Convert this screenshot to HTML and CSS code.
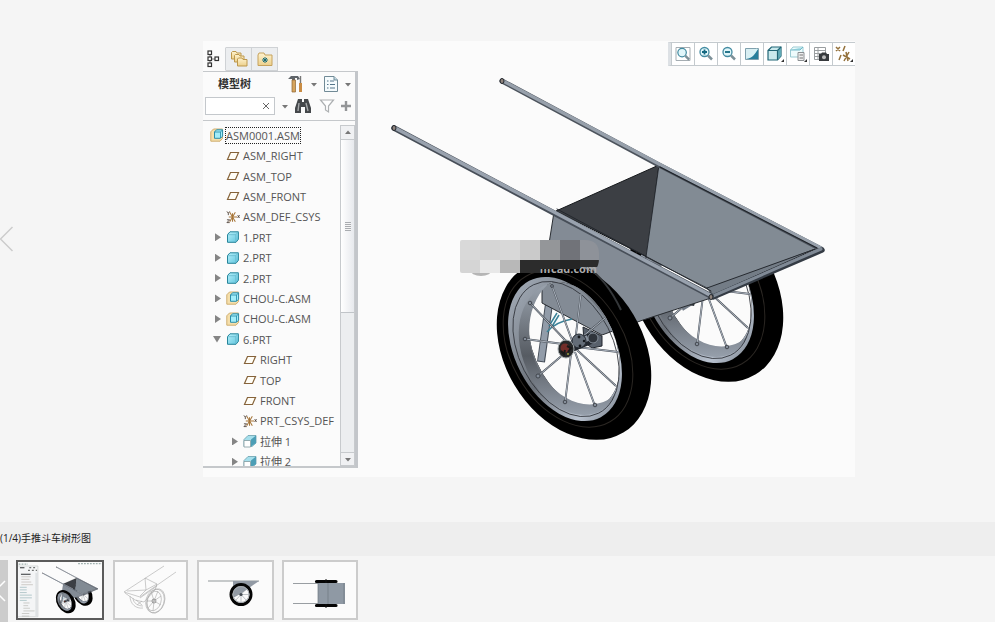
FILE: index.html
```
<!DOCTYPE html>
<html lang="zh-CN">
<head>
<meta charset="utf-8">
<title>手推斗车树形图</title>
<link rel="stylesheet" href="styles.css">
</head>
<body>
<svg class="defs" aria-hidden="true">
  <defs>
    <linearGradient id="rimFill" x1="0" y1="0" x2="1" y2="1">
      <stop offset="0" stop-color="#a7b0bc"/><stop offset=".5" stop-color="#6b7179"/><stop offset=".8" stop-color="#b9c2cf"/><stop offset="1" stop-color="#747c87"/>
    </linearGradient>
    <linearGradient id="innerRim" x1="0" y1="0" x2="0" y2="1">
      <stop offset="0" stop-color="#9aa3ae"/><stop offset=".55" stop-color="#565b62"/><stop offset="1" stop-color="#969fab"/>
    </linearGradient>
    <linearGradient id="cubeFill" x1="0" y1="0" x2="1" y2="1">
      <stop offset="0" stop-color="#b8f2fc"/><stop offset="1" stop-color="#5ec3dc"/>
    </linearGradient>
    <linearGradient id="folderFill" x1="0" y1="0" x2="0" y2="1">
      <stop offset="0" stop-color="#fff3cf"/><stop offset="1" stop-color="#ecd08c"/>
    </linearGradient>
    <clipPath id="opening"><ellipse cx="574" cy="345" rx="66" ry="41" transform="rotate(67 574 345)"/></clipPath>
    <clipPath id="smear"><path d="M462 240H585Q599 240 599 254V258Q599 273 585 273H462Q460 273 460 271V242Q460 240 462 240Z"/></clipPath>

    <symbol id="tyre" viewBox="490 250 170 200" overflow="visible">
      <path fill="#000" fill-rule="evenodd" d="M623.3 432.6A96 69 59 0 1 524.7 267.4A96 69 59 0 1 623.3 432.6ZM599.8 405.8A66 41 67 0 0 548.2 284.2A66 41 67 0 0 599.8 405.8Z"/>
      <ellipse cx="568" cy="349" rx="84" ry="57" transform="rotate(60 568 349)" fill="none" stroke="#2b2723" stroke-width="1"/>
      <path fill="url(#rimFill)" fill-rule="evenodd" d="M600.8 417.2A77 50 62.3 0 1 529.2 280.8A77 50 62.3 0 1 600.8 417.2ZM599.8 405.8A66 41 67 0 0 548.2 284.2A66 41 67 0 0 599.8 405.8Z"/>
      <path fill="url(#innerRim)" d="M548 284C525 292 508 326 527 370C541 403 571 419 592 414C604 411 612 403 616 394C595 413 565 405 545 379C525 351 522 309 548 284Z"/>
      <ellipse cx="566" cy="349" rx="72" ry="47" transform="rotate(63 566 349)" fill="none" stroke="#30343a" stroke-width=".8"/>
      <path d="M587 267C601 276 612 291 621 310" fill="none" stroke="#34373a" stroke-width="2"/>
      <g fill="none" stroke="#4c525a" stroke-width="1.9"><path d="M574 346L552 286M575 342L581 294M576 342L605 318M577 347L618 352M577 350L616 386M575 352L595 406M571 354L565 403M565 353L538 376M563 344L525 339M566 341L530 303"/></g>
      <g fill="none" stroke="#aab2bd" stroke-width="1"><path d="M574 346L552 286M575 342L581 294M576 342L605 318M577 347L618 352M577 350L616 386M575 352L595 406M571 354L565 403M565 353L538 376M563 344L525 339M566 341L530 303"/></g>
      <g fill="#848d99" stroke="#33373d" stroke-width=".8"><circle cx="552" cy="286" r="1.4"/><circle cx="595" cy="405" r="1.8"/><circle cx="565" cy="402" r="1.8"/><circle cx="538" cy="376" r="2"/><circle cx="525" cy="339" r="1.8"/><circle cx="530" cy="303" r="1.8"/></g>
    </symbol>

    <symbol id="cart" viewBox="358 70 497 407">
      <use href="#tyre" x="622" y="192" width="170" height="200"/>
      <path d="M682 309L700 298" stroke="#707985" stroke-width="4"/><path d="M688 305l6 1 2-6" fill="#30353b"/>
      <path d="M554 212L542 288V303L602 335L643 320L711 298Z" fill="#838b95" stroke="#292d32" stroke-width="1"/>
      <path d="M659 165L556 211L647 257Z" fill="#3c3f44" stroke="#15181b" stroke-width="1"/>
      <path d="M659 165L646 257L709 289L818 248Z" fill="#828b94" stroke="#1d2127" stroke-width=".8"/>
      <path d="M707 288L818 248L713 295Z" fill="#737c86" stroke="#262a30" stroke-width="1"/>
      <g stroke-linecap="round">
        <path d="M502 81L659 165L821 249" fill="none" stroke="#4c535c" stroke-width="5"/>
        <path d="M503 81L659 164L821 248" fill="none" stroke="#97a0ab" stroke-width="3.2"/>
        <path d="M660 167L817 248" fill="none" stroke="#20242a" stroke-width="1.2"/>
        <path d="M713 297L822 250" stroke="#343b44" stroke-width="5.5"/>
        <path d="M713 296L821 249" stroke="#7f8995" stroke-width="3"/>
        <path d="M394 128L554 213L711 296" fill="none" stroke="#474e58" stroke-width="5.5"/>
        <path d="M395 128L554 212L710 295" fill="none" stroke="#99a2ae" stroke-width="3.6"/>
        <path d="M557 209L711 291" stroke="#24282e" stroke-width="1"/>
      </g>
      <g fill="#90847d" stroke="#20252b"><ellipse cx="502" cy="81" rx="2" ry="2.5"/><ellipse cx="394" cy="128" rx="2" ry="2.5"/><ellipse cx="711" cy="297" rx="2" ry="2.5"/></g>
      <ellipse cx="574" cy="345" rx="66" ry="41" transform="rotate(67 574 345)" fill="#fbfbfb"/>
      <g clip-path="url(#opening)">
        <path d="M549 304L541 362" stroke="#444c57" stroke-width="8"/><path d="M549 304L541 361" stroke="#929ca9" stroke-width="6"/>
        <path d="M542 270V303L602 335L643 320L620 250Z" fill="#838b95" stroke="#292d32"/>
        <path d="M547 332Q555 322 572 319M549 326L557 313M551 328L559 315" fill="none" stroke="#3b8298" stroke-width="1.5"/>
        <path d="M583 327L602 336V346L592 348L584 342Z" fill="#59616c" stroke="#20252c"/>
      </g>
      <use href="#tyre" x="490" y="250" width="170" height="200"/>
      <path d="M568 348L592 338" stroke="#22272e" stroke-width="11"/><path d="M567 346L588 338" stroke="#89929e" stroke-width="6"/>
      <circle cx="579" cy="341" r="7" fill="#646d78" stroke="#252a31"/><circle cx="593" cy="338" r="5" fill="#30353c" stroke="#858e99"/>
      <g fill="#14171b"><circle cx="579" cy="337" r="1.4"/><circle cx="580" cy="346" r="1.4"/><circle cx="584" cy="341" r="1.2"/></g>
      <ellipse cx="566" cy="349" rx="8" ry="9" fill="#252728" stroke="#a2a9ac"/><circle cx="565" cy="348" r="4.5" fill="#712d29"/><path d="M561 351l3 3 1-4M567 346l4 2-3 4" stroke="#181818" fill="none" stroke-width="2"/><circle cx="568" cy="354" r="1" fill="#999c3f"/>
    </symbol>

    <symbol id="plane" viewBox="0 0 14 12"><path d="M4.5 2.5H12.5L9.5 9.5H1.5Z" fill="#fffdf6" stroke="#86633a" stroke-width="1.2"/></symbol>
    <symbol id="part" viewBox="0 0 14 12"><path d="M1.5 3.5L4 .8H12.4V8.3L10 11.3H1.5Z" fill="url(#cubeFill)" stroke="#26849a"/><path d="M1.5 3.7H9.8V11M9.8 3.7L12.3 1" fill="none" stroke="#65b8cc" stroke-width=".8"/></symbol>
    <symbol id="asm" viewBox="0 0 14 14"><path d="M.8 3.8L3.5 1H12.5V10.5L10 13.2H.8Z" fill="#f5dfab" stroke="#cfae70"/><path d="M4.5 4L6.5 1.8H12.6V8.2L10.5 10.3H4.5Z" fill="#a2edf9" stroke="#2b8eaa"/><path d="M4.5 4H10.5V10M10.5 4L12.4 2" fill="none" stroke="#2287a3" stroke-width=".8"/></symbol>
    <symbol id="csys" viewBox="0 0 15 14"><path d="M3 7H12M4 2L10 12M10 2L4 12M7 3V12" stroke="#a77639" stroke-width="1.1"/><path d="M1 1l1.5 2L4 1M2.5 3V5M1 10H4L1 13H4M12.5 5l2 3M14.5 5l-2 3" fill="none" stroke="#4a3b32" stroke-width=".9"/></symbol>
    <symbol id="extrude" viewBox="0 0 14 14"><path d="M1 5.5L5 1.5H13V9L9 12.5H1Z" fill="#a5dfec" stroke="#6aa0ad" stroke-width=".8"/><path d="M8 5.5L13 1.5V9L8 12.5Z" fill="#4c9eb6"/><path d="M1 6.5H7.5V13H1Z" fill="#fff" stroke="#829ba0" stroke-width=".8"/></symbol>
    <symbol id="caret" viewBox="0 0 8 5"><path d="M1 1H7L4 4.5Z" fill="#777"/></symbol>
    <symbol id="lens" viewBox="0 0 18 18"><circle cx="7.5" cy="7" r="4.5" fill="#e0f6fa" stroke="#438ba1" stroke-width="1.3"/><path d="M11 10.5L15 14.5" stroke="#7c9098" stroke-width="2.5"/></symbol>
  </defs>
</svg>

<main class="gallery">
  <section class="slide">
    <button class="prev" aria-label="上一张"><svg viewBox="0 0 14 28"><path d="M12.5 2L.5 14L12.5 26" fill="none" stroke="#ccc" stroke-width="1.5"/></svg></button>
    <div class="shot">
      <aside class="panel">
        <div class="tabs">
          <button class="tab active" aria-label="树"><svg viewBox="0 0 16 18"><path d="M4 4V15M4 9H10" stroke="#777"/><g fill="#fff" stroke="#333" stroke-width="1.2"><rect x="2" y="1" width="3.5" height="3.5"/><rect x="2" y="7" width="3.5" height="3.5"/><rect x="2" y="13" width="3.5" height="3.5"/><rect x="9" y="7" width="3.5" height="3.5"/></g></svg></button>
          <button class="tab" aria-label="文件夹"><svg viewBox="0 0 18 18"><g fill="url(#folderFill)" stroke="#bd984c"><path d="M1.5 9V2.5l1-1H6l1 1.5h4V9Z"/><path d="M4.5 12V5.5l1-1H9L10 6h4v6Z"/><path d="M7.5 16V9l1-1H12l1 1.5h4V16Z"/></g></svg></button>
          <button class="tab" aria-label="收藏夹"><svg viewBox="0 0 18 18"><path d="M2 15.5V5l1-2h5l1 2h7V15.5Z" fill="url(#folderFill)" stroke="#c6a25d"/><path d="M9 7V13M6 10H12M7 8L11 12M11 8L7 12" stroke="#176b79" stroke-width="1"/></svg></button>
        </div>
        <div class="panel-body">
          <div class="panel-head">
            <div class="head-row">
              <h2>模型树</h2>
              <button aria-label="设置" class="tool"><svg viewBox="0 0 18 18"><path d="M1 4L4 1H11L13 4L10 5V3H8V6H5V4Z" fill="#60656a"/><path d="M5 5H8.5V17H5Z" fill="#d6a45d" stroke="#8e6634" stroke-width=".7"/><path d="M13.5 1V8" stroke="#777" stroke-width="1.4"/><path d="M12 8H15V17H12Z" fill="#c98c44"/></svg></button>
              <svg class="caret"><use href="#caret"/></svg>
              <button aria-label="显示" class="tool"><svg viewBox="0 0 18 18"><path d="M2.5 1.5H12L15.5 5V16.5H2.5Z" fill="#f5fbfd" stroke="#718a96"/><path d="M12 1.5V5H15.5" fill="#c4dce6" stroke="#718a96"/><path d="M5 6H6.5M8 6H12M5 9.5H6.5M8 9.5H13M5 13H6.5M8 13H13" stroke="#54758a"/></svg></button>
              <svg class="caret"><use href="#caret"/></svg>
            </div>
            <div class="head-row">
              <div class="search"><input type="text" aria-label="搜索"><button aria-label="清除"><svg viewBox="0 0 8 8"><path d="M1 1L7 7M7 1L1 7" stroke="#666"/></svg></button></div>
              <svg class="caret"><use href="#caret"/></svg>
              <button aria-label="查找" class="tool"><svg viewBox="0 0 18 18"><path d="M4 2H8V5H10V2H14L17 11V16H11V10H7V16H1V11Z" fill="#45484b"/><path d="M5 6L4 14M12 6L14 14" stroke="#a6a9ab" stroke-width="1.4"/></svg></button>
              <button aria-label="过滤" class="tool"><svg viewBox="0 0 18 18"><path d="M2.5 3H15.5L10.5 9V15L7.5 13V9Z" fill="#fff" stroke="#adb0b2" stroke-width="1.2"/></svg></button>
              <button aria-label="添加" class="tool add"><svg viewBox="0 0 10 10"><path d="M5 0V10M0 5H10" stroke="#939597" stroke-width="2.4"/></svg></button>
            </div>
          </div>
          <div class="tree-area">
            <div class="tree-clip">
              <ul class="tree">
                <li class="root"><svg><use href="#asm"/></svg><span class="selected">ASM0001.ASM</span></li>
                <li><i></i><svg><use href="#plane"/></svg>ASM_RIGHT</li>
                <li><i></i><svg><use href="#plane"/></svg>ASM_TOP</li>
                <li><i></i><svg><use href="#plane"/></svg>ASM_FRONT</li>
                <li><i></i><svg><use href="#csys"/></svg>ASM_DEF_CSYS</li>
                <li><i class="closed"></i><svg><use href="#part"/></svg>1.PRT</li>
                <li><i class="closed"></i><svg><use href="#part"/></svg>2.PRT</li>
                <li><i class="closed"></i><svg><use href="#part"/></svg>2.PRT</li>
                <li><i class="closed"></i><svg><use href="#asm"/></svg>CHOU-C.ASM</li>
                <li><i class="closed"></i><svg><use href="#asm"/></svg>CHOU-C.ASM</li>
                <li><i class="open"></i><svg><use href="#part"/></svg>6.PRT</li>
                <li class="deep"><i></i><svg><use href="#plane"/></svg>RIGHT</li>
                <li class="deep"><i></i><svg><use href="#plane"/></svg>TOP</li>
                <li class="deep"><i></i><svg><use href="#plane"/></svg>FRONT</li>
                <li class="deep"><i></i><svg><use href="#csys"/></svg>PRT_CSYS_DEF</li>
                <li class="deep"><i class="closed"></i><svg><use href="#extrude"/></svg>拉伸 1</li>
                <li class="deep"><i class="closed"></i><svg><use href="#extrude"/></svg>拉伸 2</li>
              </ul>
            </div>
            <div class="scrollbar">
              <button aria-label="向上"><svg class="caret flip"><use href="#caret"/></svg></button>
              <div class="thumb"><span></span></div>
              <button aria-label="向下" class="down"><svg class="caret"><use href="#caret"/></svg></button>
            </div>
          </div>
        </div>
      </aside>
      <div class="stage">
        <div class="toolbar">
          <button aria-label="重新调整"><svg viewBox="0 0 18 18"><path d="M2 2.5H16V15.5H2Z" fill="#fff" stroke="#a5adb2"/><use href="#lens" x="1" y="1" width="17" height="17"/></svg></button>
          <button aria-label="放大"><svg viewBox="0 0 18 18"><use href="#lens" width="18" height="18"/><path d="M7.5 4.5V9.5M5 7H10" stroke="#146981" stroke-width="1.8"/></svg></button>
          <button aria-label="缩小"><svg viewBox="0 0 18 18"><use href="#lens" width="18" height="18"/><path d="M5 7H10" stroke="#146981" stroke-width="1.8"/></svg></button>
          <button aria-label="重画"><svg viewBox="0 0 18 18"><path d="M2.5 3.5H15.5V14.5H2.5Z" fill="#d9eff3" stroke="#7fa0ad"/><path d="M3 14C10 13 12 9 15 4V14Z" fill="#287f9b"/><path d="M6 12L14 4" stroke="#d5f3f6" stroke-width="1.5"/></svg></button>
          <button aria-label="显示样式"><svg viewBox="0 0 18 18"><path d="M2 5.5L5.5 2H15V11L11.5 15H2Z" fill="#c9e9ed" stroke="#216676" stroke-width="1.2"/><path d="M11.5 5.5L15 2V11L11.5 15Z" fill="#5fa9b6"/><path d="M2 5.5H11.5V15M11.5 5.5L15 2" fill="none" stroke="#216676" stroke-width="1.2"/><path d="M15 17h3v-3z" fill="#333"/></svg></button>
          <button aria-label="视图"><svg viewBox="0 0 18 18"><path d="M1.5 5L4 2H14V12H1.5Z" fill="#eefbfc" stroke="#9bcbd3"/><path d="M1.5 5H11L14 2" fill="#a8dfe8" stroke="#73b8c7"/><path d="M9 7.5H15V15.5H9Z" fill="#eee" stroke="#8b8f92"/><path d="M10.5 10H14M10.5 13H14" stroke="#777"/><path d="M15 17h3v-3z" fill="#333"/></svg></button>
          <button aria-label="视图管理器"><svg viewBox="0 0 18 18"><path d="M2.5 2.5H13.5V14.5H2.5ZM2.5 5.5H13.5M2.5 8.5H13.5M2.5 11.5H8M6 2.5V14" fill="#fff" stroke="#9a9ea0"/><path d="M7 9H9L10 7.5H14L15 9H17V16H7Z" fill="#373a3d"/><circle cx="12" cy="12.3" r="2" fill="#bbb"/></svg></button>
          <button aria-label="基准显示"><svg viewBox="0 0 18 18"><path d="M1 2L5 6M5 2L1 6M10 1L8 6M6 10L4 15M8 10L15 14M14 7L9 16M11 7L13 16" fill="none" stroke="#94713b" stroke-width="1.5"/><path d="M15 17h3v-3z" fill="#333"/></svg></button>
        </div>
        <svg class="drawing" viewBox="358 70 497 407" role="img">
          <use href="#cart" x="358" y="70" width="497" height="407"/>
          <ellipse cx="481" cy="270" rx="11" ry="6" fill="#b5b5b5"/>
          <text x="536" y="273" class="watermark">mfcad.com</text>
          <g clip-path="url(#smear)">
            <g shape-rendering="crispEdges">
            <path d="M460 240h20v20h-20z" fill="#d9d9d9"/><path d="M480 240h20v20h-20z" fill="#d5d5d5"/><path d="M500 240h20v20h-20z" fill="#d8d8d8"/><path d="M520 240h20v20h-20z" fill="#cacaca"/><path d="M540 240h20v20h-20z" fill="#949699"/><path d="M560 240h20v20h-20z" fill="#717379"/><path d="M580 240h20v20h-20z" fill="#8e9299"/>
            <path d="M460 260h20v13h-20z" fill="#d5d5d5"/><path d="M480 260h20v13h-20z" fill="#e8e8e8"/><path d="M500 260h20v13h-20z" fill="#b8b8b8"/><path d="M520 260h20v13h-20z" fill="#2c2c2c"/><path d="M540 260h20v9h-20z" fill="#2c2c2c"/><path d="M560 260h20v9h-20z" fill="#252525"/><path d="M580 260h19v7h-19z" fill="#2b2b2b"/>
            </g>
          </g>
        </svg>
      </div>
    </div>
  </section>
  <p class="caption">(1/4)手推斗车树形图</p>
  <nav class="thumbs">
    <button class="thumbs-prev" aria-label="向前"><svg viewBox="0 0 8 24"><path d="M5 2L-5 12L5 22" fill="none" stroke="#fff" stroke-width="1.5"/></svg></button>
    <a href="#" class="thumbnail current" aria-label="1"><svg viewBox="203 41 652 436">
      <path d="M203 41H855V477H203Z" fill="#fbfbfb"/><path d="M203 72H357V467H203" fill="#f4f5f6" stroke="#c5c8ca" stroke-width="5"/><path d="M337 125H357V467H337Z" fill="#dfe2e4"/>
      <path d="M207 58H280M670 54H855" stroke="#9fb0ae" stroke-width="9" stroke-dasharray="14 9"/><path d="M217 85H252M225 136H300" stroke="#303437" stroke-width="8"/><path d="M290 85H345M280 107H350" stroke="#737675" stroke-width="10" stroke-dasharray="15 15"/>
      <path d="M228 156H301M228 176H291M228 197H305M228 218H318" stroke="#aaa29a" stroke-width="4"/><path d="M216 238H270M216 258H270M216 279H270M216 299H310M216 320H310M216 340H270" stroke="#91b0b5" stroke-width="5"/><path d="M244 360H292M244 381H281M244 401H295M244 422H331M232 442H290M232 462H290" stroke="#a4a49d" stroke-width="4"/>
      <use href="#cart" x="358" y="70" width="497" height="407"/>
    </svg></a>
    <a href="#" class="thumbnail second" aria-label="2"><svg viewBox="0 0 71 56" fill="none" stroke="#aaa" stroke-width=".6">
      <path d="M9 30L49 4M25 35L61 10M30 16L42 22M9 30L25 35M30 16L31 28L42 22M12 29L31 28L25 34M10 31L20 38L29 40L40 28L42 22M25 36L42 24"/>
      <ellipse cx="41" cy="39" rx="8.5" ry="12.5" transform="rotate(18 41 39)"/><ellipse cx="40" cy="39" rx="9" ry="12" transform="rotate(18 40 39)"/><ellipse cx="39" cy="39" rx="7" ry="10" transform="rotate(18 39 39)"/><path d="M39 39L36 29M39 39L43 29M39 39L46 34M39 39L46 43M39 39L38 49M39 39L33 46M39 39L32 39"/><circle cx="39" cy="39" r="2" stroke="#666"/>
      <path d="M15 34C15 42 21 47 28 46M18 36C18 41 23 44 28 44M21 38L27 43M27 39L22 43"/>
    </svg></a>
    <a href="#" class="thumbnail third" aria-label="3"><svg viewBox="0 0 73 56">
      <path d="M9 19H60" stroke="#b5b8ba" stroke-width="1.5"/><path d="M34 19H60L43 31L34 36Z" fill="#929aa4"/><circle cx="42" cy="32.5" r="10" fill="none" stroke="#050505" stroke-width="3"/><circle cx="42" cy="32.5" r="8" fill="none" stroke="#a8adb1"/><path d="M42 24V41M34 32.5H50M36 26L48 39M48 26L36 39" stroke="#999fa4" stroke-width=".6"/><circle cx="42" cy="32.5" r="1.6" fill="#444b52"/>
    </svg></a>
    <a href="#" class="thumbnail fourth" aria-label="4"><svg viewBox="0 0 72 56">
      <path d="M9 21.5H60M9 41.5H60" stroke="#999ea2"/><path d="M34 21H61V42H34Z" fill="#8f99a4"/><path d="M34 21V42M44 21V42M60 21V42" stroke="#6f7882" stroke-width=".7"/><path d="M32.5 19.5H52M32.5 43.5H52" stroke="#050505" stroke-width="3.2" stroke-linecap="round"/><path d="M42 17V21M42 42V46" stroke="#111"/>
    </svg></a>
  </nav>
</main>
</body>
</html>
```
FILE: styles.css
```
* { box-sizing: border-box; }
body { margin: 0; background: #fff; font-family: "Open Sans", "Noto Sans CJK SC", sans-serif; color: #444; }
button { padding: 0; border: 0; background: none; font: inherit; display: grid; place-items: center; }
svg { display: block; }
.defs { position: absolute; width: 0; height: 0; }

.gallery { background: #f5f5f5; }
.slide { position: relative; padding: 41px 0 45px 203px; }
.prev { position: absolute; left: 0; top: 225px; }
.prev svg { width: 14px; height: 28px; }
.shot { display: grid; grid-template-columns: 155px 497px; width: max-content; background: #fbfbfb; }

.panel { padding: 6px 0 9px; }
.tabs { display: flex; height: 24px; }
.tab { width: 26px; background: #eceef0; border: 1px solid #cfd2d5; border-left: 0; }
.tab.active { width: 23px; background: #fbfbfb; border-color: #fbfbfb #cfd2d5 #fbfbfb #fbfbfb; }
.tab svg { width: 18px; height: 18px; }
.panel-body { border-top: 1px solid #c5c8cb; border-right: 3px solid #c3c6ca; border-bottom: 2px solid #c5c8cb; }
.panel-head { height: 49px; padding: 1px 3px 0 2px; border-bottom: 1px solid #c5c8cb; }
.head-row { display: flex; align-items: center; justify-content: space-between; height: 22px; }
.head-row h2 { margin: 0 32px 0 13px; font-size: 11px; line-height: 20px; font-weight: 700; color: #333; }
.tool svg { width: 18px; height: 18px; }
.tool.add svg { width: 10px; height: 10px; }
.tool.add { margin-right: 1px; }
.caret { width: 8px; height: 5px; }
.flip { transform: rotate(180deg); }
.search { display: flex; width: 70px; height: 18px; border: 1px solid #c4c8cc; background: #fff; }
.search input { flex: 1; min-width: 0; border: 0; padding: 0 2px; background: none; font: inherit; }
.search button { width: 16px; }
.search svg { width: 8px; height: 8px; }

.tree-area { display: grid; grid-template-columns: 1fr 15px; height: 345px; padding-top: 4px; }
.tree-clip { overflow: hidden; }
.tree { display: grid; grid-auto-rows: 1fr; height: 347px; margin: 0; padding: 0; list-style: none; font-size: 11px; line-height: 15px; color: #555; white-space: nowrap; }
.tree li { display: flex; align-items: center; gap: 3px; padding-left: 10px; }
.tree .root { padding-left: 7px; gap: 2px; }
.tree .deep { padding-left: 27px; }
.tree svg { flex: none; width: 14px; height: 14px; }
.tree i { flex: none; width: 10px; height: 8px; background: none; }
.tree .closed { background: #858585; clip-path: polygon(20% 0, 80% 50%, 20% 100%); }
.tree .open { background: #858585; clip-path: polygon(0 10%, 80% 10%, 40% 90%); }
.selected { outline: 1px dotted #222; }

.scrollbar { display: flex; flex-direction: column; background: #eceef0; border: 1px solid #c7cacd; border-bottom: 0; }
.scrollbar button { height: 14px; background: #f0f1f3; border-bottom: 1px solid #c7cacd; }
.scrollbar .down { margin-top: auto; border-top: 1px solid #c7cacd; }
.thumb { display: grid; place-items: center; height: 173px; border-bottom: 1px solid #c0c4c8; background: linear-gradient(90deg, #fff, #e7e9ed); }
.thumb span { width: 6px; height: 9px; background: repeating-linear-gradient(#a9acb0 0 1px, #f5f5f5 1px 2px); }

.stage { display: flex; flex-direction: column; min-width: 0; }
.toolbar { display: flex; align-self: flex-end; height: 24px; margin: 1px 0 4px; border: 1px solid #c4cace; border-right: 0; border-left: 3px solid #dde1e5; background: #fff; }
.toolbar button { width: 23px; border-left: 1px solid #c4cace; }
.toolbar svg { width: 18px; height: 18px; }
.drawing { width: 100%; height: auto; }
.watermark { font: 700 11px "Open Sans", sans-serif; fill: #aaa; }

.caption { margin: 0; height: 34px; background: #eee; font-family: "Open Sans", "Noto Sans CJK SC", sans-serif; font-size: 10px; line-height: 32px; color: #222; }
.thumbs { display: flex; align-items: flex-start; padding-top: 4px; height: 66px; }
.thumbs-prev { width: 8px; height: 62px; margin-right: 8px; background: #ccc; }
.thumbs-prev svg { width: 8px; height: 24px; }
.thumbnail { height: 60px; margin-right: 9px; border: 2px solid #ccc; background: #fbfbfb; }
.thumbnail svg { width: 100%; height: 100%; }
.current { width: 88px; border-color: #5b5b5b; }
.second { width: 75px; }
.third { width: 77px; margin-right: 8px; }
.fourth { width: 76px; }
```
